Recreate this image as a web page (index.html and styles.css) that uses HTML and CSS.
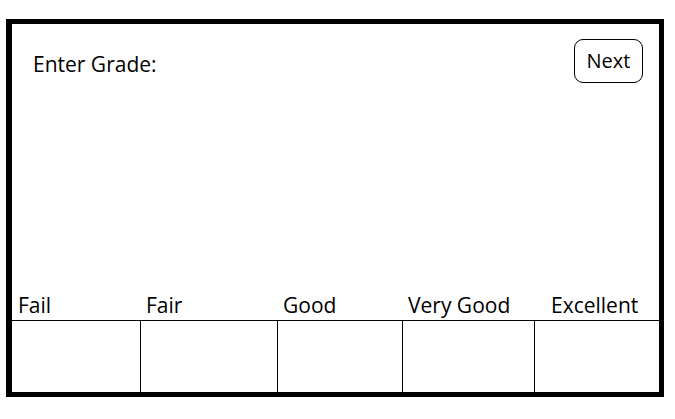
FILE: index.html
```html
<!DOCTYPE html>
<html lang="en">
<head>
<meta charset="UTF-8">
<title>Enter Grade</title>
<link rel="stylesheet" href="styles.css">
</head>
<body>

<!-- grade entry panel -->
<div class="frame">
  <div class="header">
    <span class="prompt">Enter Grade:</span>
    <button class="next">Next</button>
  </div>

  <div class="spacer"></div>

  <div class="labels">
    <span class="label">Fail</span>
    <span class="label">Fair</span>
    <span class="label">Good</span>
    <span class="label">Very Good</span>
    <span class="label label-wide">Excellent</span>
  </div>

  <div class="cells">
    <div class="cell"></div>
    <div class="cell"></div>
    <div class="cell"></div>
    <div class="cell"></div>
    <div class="cell"></div>
  </div>
</div>

</body>
</html>
```

FILE: styles.css
```css
body {
  font-family: 'Open Sans', 'Liberation Sans', sans-serif;
  margin: 0;
  background-color: #fff;
  color: #000;
}
.frame {
  box-sizing: border-box;
  width: 658px;
  height: 378px;
  margin: 19px 0 0 6px;
  border: 5px solid #000;
  border-left-width: 6px;
  display: flex;
  flex-direction: column;
}
.header {
  display: flex;
  justify-content: space-between;
  align-items: flex-start;
  padding: 15px 16px 0 21px;
}
.prompt {
  font-size: 21px;
  line-height: 24px;
  margin-top: 13px;
}
.next {
  font-family: inherit;
  font-size: 20px;
  line-height: 24px;
  width: 69px;
  height: 44px;
  padding: 0;
  background: #fff;
  color: #000;
  border: 1px solid #000;
  border-radius: 9px;
  cursor: pointer;
}
.spacer {
  flex: 1;
}
.labels,
.cells {
  display: grid;
  grid-template-columns: 128px 137px 125px 132px 125px;
}
.label {
  font-size: 21px;
  line-height: 24px;
  padding: 0 0 3px 6px;
}
.label-wide {
  padding-left: 17px;
}
.cells {
  height: 71px;
  border-top: 1px solid #000;
}
.cell + .cell {
  border-left: 1px solid #000;
}
```
